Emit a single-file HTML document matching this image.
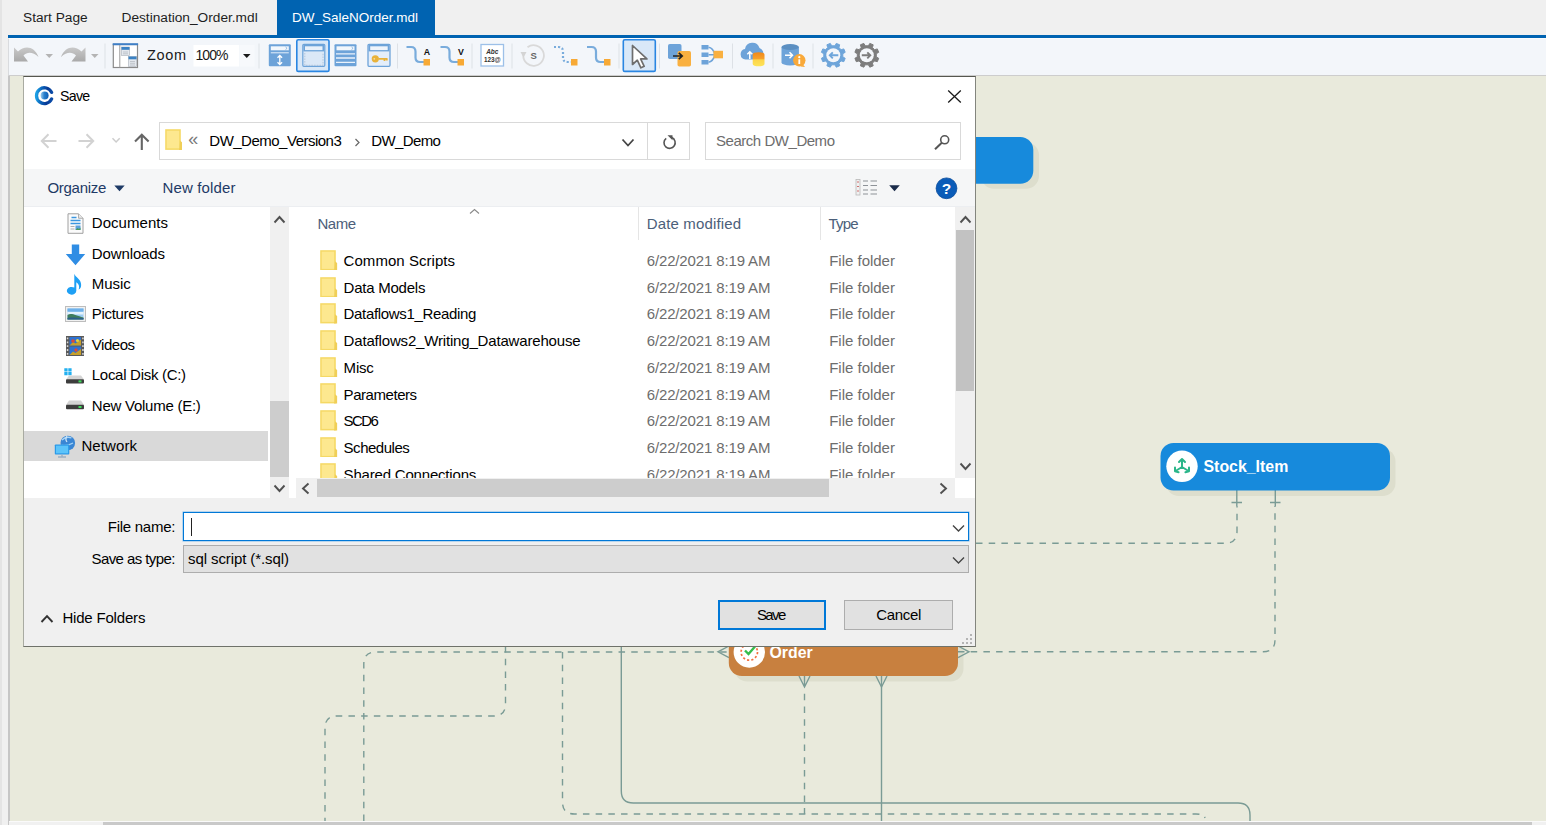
<!DOCTYPE html>
<html><head><meta charset="utf-8"><title>Save</title>
<style>
*{box-sizing:border-box;margin:0;padding:0}
html,body{width:1546px;height:825px;overflow:hidden;background:#f0f0f0;font-family:"Liberation Sans",sans-serif;color:#000}
.abs{position:absolute}
.t{position:absolute;white-space:nowrap;line-height:20px;height:20px}
#tabbar{left:0;top:0;width:1546px;height:35px;background:#f0f0f0}
#ledge{left:0;top:0;width:2px;height:825px;background:#e4e4e4}
#acttab{left:277px;top:0;width:158px;height:36px;background:#0063b1}
#blueline{left:7.500px;top:35px;width:1539px;height:2.700px;background:#0063b1}
#toolbar{left:8px;top:37.700px;width:1538px;height:38.300px;background:#f3f6fa;border-bottom:1px solid #cdcdcd;border-left:1px solid #d9dbde;border-top:1px solid #fafbfc}
#canvas{left:10px;top:76px;width:1536px;height:744.500px;background:#e9eadc}
#cborder{left:8px;top:76px;width:2px;height:749px;background:#c6c6c6}
#hscroll{left:9px;top:820.500px;width:1537px;height:4.500px;background:#f1f1f1;border-top:1px solid #fafafa}
#hthumb{left:102.500px;top:822.300px;width:1429.500px;height:3px;background:#c9c9c9}
.sep{position:absolute;top:44px;width:1px;height:25px;background:#dfe3e8}
#dialog{left:23px;top:76px;width:953px;height:571px;background:#f0f0f0;border:1px solid #83857e;border-top-color:#55574f;border-bottom-color:#6f726a;border-left-color:#a9aba2;overflow:hidden}
</style></head><body>
<div class="abs" id="tabbar"></div>
<div class="abs" id="ledge"></div>
<div class="abs" id="acttab"></div>
<div class="t" style="left:23px;top:7.800px;font-size:13.700px;color:#1e1e1e">Start Page</div>
<div class="t" style="left:121.500px;top:7.800px;font-size:13.700px;color:#1e1e1e">Destination_Order.mdl</div>
<div class="t" style="left:292px;top:7.800px;font-size:13.500px;color:#fff">DW_SaleNOrder.mdl</div>
<div class="abs" id="blueline"></div>
<div class="abs" id="toolbar"></div>
<!--TOOLBAR-S-->
<svg class="abs" style="left:9px;top:38px" width="1000" height="37" viewBox="9 38 1000 37">
<defs><linearGradient id="ug" x1="0" y1="0" x2="0" y2="1"><stop offset="0" stop-color="#c9c9c9"/><stop offset="1" stop-color="#a9a9a9"/></linearGradient></defs>
<path d="M14 61.5V47.5l4 4c7-6.5 16.5-5 20.5 5.5-5.5-5-11-5.5-15-1.5l4.5 6z" fill="url(#ug)"/>
<path d="M45.5 54h7.5l-3.75 4z" fill="#b4b4b4"/>
<path d="M85.5 61.5V47.5l-4 4c-7-6.5-16.5-5-20.5 5.5 5.5-5 11-5.5 15-1.5l-4.5 6z" fill="url(#ug)"/>
<path d="M91 54h7.5l-3.75 4z" fill="#b4b4b4"/>
<rect x="104.5" y="43.5" width="1" height="25" fill="#dde1e6"/>
<rect x="113.3" y="44.5" width="24.2" height="23" fill="#fff" stroke="#8a8a8a" stroke-width="1.2"/>
<path d="M112.7 44.2h25.4" stroke="#3f7fc6" stroke-width="2"/>
<path d="M119.8 45v22.5" stroke="#9a9a9a" stroke-width="1"/>
<rect x="121.5" y="47" width="8" height="8.5" fill="#e4e8ee" stroke="#a8b0ba" stroke-width="0.6"/><rect x="121.5" y="47" width="8" height="2.8" fill="#3b82c4"/><path d="M123 52h5M123 53.8h5" stroke="#b0b6bd" stroke-width="0.7"/>
<rect x="128.5" y="56.5" width="8" height="10" fill="#e4e8ee" stroke="#a8b0ba" stroke-width="0.6"/><rect x="128.5" y="56.5" width="8" height="2.8" fill="#3b82c4"/><path d="M130 61.5h5M130 63.3h5M130 65h5" stroke="#b0b6bd" stroke-width="0.7"/>
<rect x="193.5" y="45" width="45.5" height="21.5" fill="#fff"/>
<rect x="239.5" y="45" width="15" height="21.5" fill="#f7f9fc"/>
<path d="M243 54h7.5l-3.75 4z" fill="#1a1a1a"/>
<rect x="258.5" y="43.5" width="1" height="25" fill="#dde1e6"/>
<rect x="268.8" y="44.3" width="22" height="22" rx="1" fill="#6da3d9"/>
<rect x="270.8" y="46.3" width="18" height="4" fill="#f2f7fc"/><path d="M285.5 47l1.6 1.3-1.6 1.3" stroke="#6da3d9" stroke-width="0.7" fill="none"/>
<path d="M270.8 52.8h18" stroke="#e6effa" stroke-width="1"/>
<path d="M279.8 55.5v9M277.5 57.8l2.3-2.3 2.3 2.3M277.5 62.2l2.3 2.3 2.3-2.3" stroke="#fff" stroke-width="1.3" fill="none"/>
<rect x="296.8" y="39.8" width="32.2" height="31.6" rx="1.5" fill="#d9e8f8" stroke="#2a86e2" stroke-width="1.6"/>
<rect x="302.8" y="44.3" width="22" height="22" rx="1" fill="#dbe8f7" stroke="#6da3d9" stroke-width="1.2"/>
<rect x="303.4" y="44.9" width="20.8" height="6.5" fill="#6da3d9"/><rect x="305" y="46.3" width="17.5" height="3.8" fill="#e9f1fa"/>
<path d="M304.8 53v12.3h18.2V53" fill="none" stroke="#a9bdd3" stroke-width="0.8" stroke-dasharray="1.5 1.2"/>
<rect x="334.5" y="44.3" width="22" height="22" rx="1" fill="#6da3d9"/>
<rect x="336.5" y="46.3" width="18" height="4" fill="#f2f7fc"/><path d="M351.5 47l1.6 1.3-1.6 1.3" stroke="#6da3d9" stroke-width="0.7" fill="none"/>
<path d="M336 53.8h19M336 58h19M336 62.3h19" stroke="#eaf2fb" stroke-width="1.3"/>
<rect x="368" y="44.3" width="22" height="22" rx="1" fill="#e4eefa" stroke="#6da3d9" stroke-width="1.3"/>
<rect x="368.6" y="44.9" width="20.8" height="6.5" fill="#6da3d9"/><rect x="370.2" y="46.3" width="17.5" height="3.8" fill="#eef4fb"/>
<circle cx="375.3" cy="58.8" r="3.6" fill="#e8b23a"/><circle cx="374.3" cy="58.8" r="0.9" fill="#f6deA0"/><path d="M378.5 58.8h9M384.5 58.8v2.2M386.8 58.8v1.8" stroke="#e8b23a" stroke-width="1.8"/>
<rect x="397" y="43.5" width="1" height="25" fill="#dde1e6"/>
<path d="M406.5 47h4.5q4.5 0 4.5 4.5v6q0 4.5 4.5 4.5h4" fill="none" stroke="#79acdc" stroke-width="2.2" />
<rect x="423.5" y="59" width="6.5" height="6.5" fill="#f7a935"/>
<text x="427" y="54.5" text-anchor="middle" font-family="Liberation Sans, sans-serif" font-weight="bold" font-size="8.8" fill="#111">A</text>
<path d="M440.5 47h4.5q4.5 0 4.5 4.5v6q0 4.5 4.5 4.5h4" fill="none" stroke="#79acdc" stroke-width="2.2" />
<rect x="457.5" y="59" width="6.5" height="6.5" fill="#f7a935"/>
<text x="461" y="54.5" text-anchor="middle" font-family="Liberation Sans, sans-serif" font-weight="bold" font-size="8.8" fill="#111">V</text>
<rect x="471.5" y="43.5" width="1" height="25" fill="#dde1e6"/>
<rect x="481" y="44.5" width="22.5" height="21.5" fill="#fff" stroke="#9dc0e8" stroke-width="1.3"/>
<text x="492.3" y="53.8" text-anchor="middle" font-family="Liberation Sans, sans-serif" font-style="italic" font-weight="bold" font-size="6.5" fill="#333">Abc</text>
<text x="492.3" y="62" text-anchor="middle" font-family="Liberation Sans, sans-serif" font-weight="bold" font-size="6.3" fill="#333">123@</text>
<rect x="511.5" y="43.5" width="1" height="25" fill="#dde1e6"/>
<path d="M527.5 47.2A10.3 10.3 0 1 1 523.3 55" fill="none" stroke="#d9d9d9" stroke-width="1.8"/>
<path d="M520.5 52h6l-3 5.5z" fill="#d4d4d4"/>
<text x="533.6" y="59.3" text-anchor="middle" font-family="Liberation Sans, sans-serif" font-weight="bold" font-size="9.5" fill="#666">S</text>
<path d="M554 47h4.5q4.5 0 4.5 4.5v6q0 4.5 4.5 4.5h4" fill="none" stroke="#79acdc" stroke-width="2.2" stroke-dasharray="2 2"/>
<rect x="571" y="59" width="6.5" height="6.5" fill="#f7a935"/>
<path d="M587 47h4.5q4.5 0 4.5 4.5v6q0 4.5 4.5 4.5h4" fill="none" stroke="#79acdc" stroke-width="2.2" />
<rect x="604" y="59" width="6.5" height="6.5" fill="#f7a935"/>
<rect x="618.5" y="43.5" width="1" height="25" fill="#dde1e6"/>
<rect x="623.3" y="39.8" width="32" height="31.6" rx="1.5" fill="#d9e8f8" stroke="#2a86e2" stroke-width="1.6"/>
<path d="M632.5 45.5V64.5l4.8-4.3 3.6 7.6 3.3-1.5-3.6-7.4h6.3z" fill="#fff" stroke="#6e6e6e" stroke-width="1.7" stroke-linejoin="round"/>
<rect x="659" y="43.5" width="1" height="25" fill="#dde1e6"/>
<rect x="668" y="44" width="13.5" height="15" rx="1.8" fill="#6da3d9"/>
<rect x="677.5" y="51" width="13.5" height="15.5" rx="1.8" fill="#f9b040"/>
<path d="M673 56h9M678.8 52.8l3.4 3.2-3.4 3.2" stroke="#222" stroke-width="1.7" fill="none"/>
<rect x="701.5" y="45" width="7" height="4.5" fill="#6da3d9"/><rect x="701.5" y="52.5" width="7" height="4.5" fill="#6da3d9"/><rect x="701.5" y="60" width="7" height="4.5" fill="#6da3d9"/>
<path d="M708.5 47.3q4.5 0.5 6.5 7.5M708.5 62.3q4.5-0.5 6.5-7.5M708.5 54.8h7" stroke="#6da3d9" stroke-width="1.6" fill="none"/>
<rect x="713.5" y="50.8" width="9.5" height="7.5" fill="#f9b040"/>
<rect x="732" y="43.5" width="1" height="25" fill="#dde1e6"/>
<path d="M745.5 59.5a5.3 5.3 0 0 1-0.5-10.5 7.5 7.5 0 0 1 14.5-1 5.5 5.5 0 0 1 3.3 7.5v4z" fill="#6da3d9"/>
<path d="M749.8 59v-7M747.3 54.3l2.5-2.5 2.5 2.5" stroke="#fff" stroke-width="1.5" fill="none"/>
<defs><linearGradient id="dbg" x1="0" y1="0" x2="0" y2="1"><stop offset="0" stop-color="#f08818"/><stop offset="0.45" stop-color="#f7a02a"/><stop offset="0.55" stop-color="#fdd54a"/><stop offset="1" stop-color="#fde45a"/></linearGradient></defs>
<path d="M752.7 54.5v9.5a5.9 2.3 0 0 0 11.8 0v-9.5a5.9 2.3 0 0 0-11.8 0z" fill="url(#dbg)"/>
<rect x="772.5" y="43.5" width="1" height="25" fill="#dde1e6"/>
<path d="M781.5 47v15.5a8.7 3 0 0 0 17.4 0V47z" fill="#6da3d9"/><ellipse cx="790.2" cy="47" rx="8.7" ry="3" fill="#5b8fc2"/>
<path d="M785 55.3h7M789.5 52.3l3 3-3 3" stroke="#fff" stroke-width="1.5" fill="none"/>
<circle cx="799.3" cy="60.3" r="6.2" fill="#f9a93a"/><path d="M803 64.5l2 2.5-4.5-0.5z" fill="#f9a93a"/><rect x="798.4" y="59.3" width="1.8" height="4.7" fill="#fff"/><circle cx="799.3" cy="57.2" r="1.1" fill="#fff"/>
<rect x="812.5" y="43.5" width="1" height="25" fill="#dde1e6"/>
<path d="M845.2 58.3L843.8 61.7L841.1 60.9L838.9 63.1L839.7 65.8L836.3 67.2L834.9 64.8L831.7 64.8L830.3 67.2L826.9 65.8L827.7 63.1L825.5 60.9L822.8 61.7L821.4 58.3L823.8 56.9L823.8 53.7L821.4 52.3L822.8 48.9L825.5 49.7L827.7 47.5L826.9 44.8L830.3 43.4L831.7 45.8L834.9 45.8L836.3 43.4L839.7 44.8L838.9 47.5L841.1 49.7L843.8 48.9L845.2 52.3L842.8 53.7L842.8 56.9z" fill="#6ea5da" stroke="#6ea5da" stroke-width="1" stroke-linejoin="round"/>
<circle cx="833.3" cy="55.3" r="7" fill="#f3f6fa"/>
<path d="M838.3 55.3h-8M832.8 52.3l-3 3 3 3" stroke="#6ea5da" stroke-width="1.9" fill="none"/>
<path d="M878.7 58.3L877.3 61.7L874.6 60.9L872.4 63.1L873.2 65.8L869.8 67.2L868.4 64.8L865.2 64.8L863.8 67.2L860.4 65.8L861.2 63.1L859 60.9L856.3 61.7L854.9 58.3L857.3 56.9L857.3 53.7L854.9 52.3L856.3 48.9L859 49.7L861.2 47.5L860.4 44.8L863.8 43.4L865.2 45.8L868.4 45.8L869.8 43.4L873.2 44.8L872.4 47.5L874.6 49.7L877.3 48.9L878.7 52.3L876.3 53.7L876.3 56.9z" fill="#7d7d7d" stroke="#7d7d7d" stroke-width="1" stroke-linejoin="round"/>
<circle cx="866.8" cy="55.3" r="7" fill="#f3f6fa"/>
<path d="M861.8 55.3h8M867.3 52.3l3 3-3 3" stroke="#7d7d7d" stroke-width="1.9" fill="none"/>
</svg>
<div class="t" style="left:147px;top:45px;font-size:14.5px;letter-spacing:0.7px;color:#1a1a1a">Zoom</div>
<div class="t" style="left:195.5px;top:45px;font-size:14px;letter-spacing:-0.95px;color:#1a1a1a">100%</div>
<!--TOOLBAR-E-->
<div class="abs" id="cborder"></div>
<div class="abs" id="canvas">
<!--CANVAS-S-->
<svg class="abs" style="left:0;top:0" width="1536" height="745" viewBox="10 76 1536 745">
<!-- shadows -->
<rect x="981" y="142.300" width="58" height="46.500" rx="13" fill="#dddecd"/>
<rect x="1166" y="448.500" width="229.500" height="47.500" rx="13" fill="#dddecd"/>
<rect x="734.300" y="634.500" width="229.200" height="47" rx="13" fill="#dddecd"/>
<g fill="none" stroke="#7a9b95" stroke-width="1.4">
 <g stroke-dasharray="6.5 6.2">
  <path d="M363.8 821V664q0-12 12-12H729"/>
  <path d="M505.5 646V704q0 12-12 12H337q-12 0-12 12V821"/>
  <path d="M562.5 652V802q0 12 12 12H1196q8 0 9 4"/>
  <path d="M976 543.3H1225q12 0 12-12V506"/>
  <path d="M958 651.8H1263q12 0 12-12V506"/>
  <path d="M804.5 693.800V814"/>
 </g>
 <path d="M621.3 646V791q0 12 12 12H1238q12 0 12 12V821"/>
 <path d="M881.5 676V821"/>
 <path d="M1236.8 490V506M1231.5 502.5h10.5M1275.3 490V506M1270 502.5h10.5"/>
 <path d="M804.5 676V687M799 676l5.500 11 5.500-11M876 676l5.500 11 5.500-11"/>
 <path d="M729 646l-11 5.8 11 5.8M958 646l11 5.8-11 5.8"/>
</g>
<!-- nodes -->
<rect x="940" y="137" width="93.300" height="46.800" rx="13" fill="#178adc"/>
<rect x="1160.500" y="443" width="229.500" height="47.500" rx="13" fill="#178adc"/>
<rect x="728.800" y="629" width="229.200" height="47" rx="13" fill="#c8803f"/>
<circle cx="1182" cy="466.300" r="15.700" fill="#fff"/>
<g stroke="#2bb68a" stroke-width="2" fill="none" stroke-linecap="round" stroke-linejoin="round">
 <path d="M1182 467V459.500M1179 462l3-3 3 3M1182 467l-6.500 4M1175 467.500l0 3.800 3.600 1M1182 467l6.500 4M1189 467.500l0 3.800-3.600 1"/>
</g>
<circle cx="749.300" cy="652" r="15.700" fill="#fff"/>
<circle cx="749.300" cy="652" r="8.200" fill="none" stroke="#f4703f" stroke-width="1.700" stroke-dasharray="2.200 2.100"/>
<path d="M745 650.500l3.500 3.500 6.500-7.500" fill="none" stroke="#36bd4c" stroke-width="2.400"/>
<text x="1203.500" y="471.800" font-family="Liberation Sans, sans-serif" font-weight="bold" font-size="15.900" fill="#fff">Stock_Item</text>
<text x="769.500" y="657.500" font-family="Liberation Sans, sans-serif" font-weight="bold" font-size="15.900" fill="#fff">Order</text>
</svg>
<!--CANVAS-E-->
</div>
<div class="abs" id="hscroll"></div><div class="abs" id="hthumb"></div>
<div class="abs" id="dialog">
<!--DIALOG-S-->
<div class="abs" style="left:-24px;top:-77px;width:1546px;height:825px">
<div class="abs" style="left:24px;top:77px;width:951px;height:92px;background:#fff"></div>
<div class="abs" style="left:24px;top:169px;width:951px;height:38px;background:#f5f6f7"></div>
<div class="abs" style="left:24px;top:205.5px;width:951px;height:1.5px;background:#eceef1"></div>
<div class="abs" style="left:24px;top:207px;width:951px;height:290.5px;background:#fff"></div>
<svg class="abs" style="left:34px;top:85px" width="21" height="21" viewBox="0 0 21 21">
<defs><linearGradient id="cg" x1="0" y1="0.4" x2="1" y2="0.5"><stop offset="0" stop-color="#1c9fe4"/><stop offset="0.3" stop-color="#0c66bc"/><stop offset="0.7" stop-color="#073a96"/><stop offset="1" stop-color="#0a4aa6"/></linearGradient>
<linearGradient id="eg" x1="0" y1="0" x2="1" y2="0"><stop offset="0" stop-color="#9ccdf0"/><stop offset="0.45" stop-color="#2a80cc"/><stop offset="1" stop-color="#0d5cb4"/></linearGradient></defs>
<path d="M17.6 7.4A7.9 7.9 0 1 0 17.6 13.9" fill="none" stroke="url(#cg)" stroke-width="3.3" stroke-linecap="round"/>
<circle cx="10.6" cy="10.6" r="4" fill="url(#eg)"/></svg>
<div class="t" style="left:60px;top:86.28px;font-size:14.2px;letter-spacing:-0.722px">Save</div>
<svg class="abs" style="left:947px;top:89px" width="15" height="15" viewBox="0 0 15 15"><path d="M1.2 1.5l12.6 12M13.8 1.5L1.2 13.5" stroke="#1a1a1a" stroke-width="1.3" fill="none"/></svg>
<svg class="abs" style="left:38px;top:130px" width="115" height="22" viewBox="38 130 115 22" fill="none">
<path d="M56.5 141H42M48.5 134.3L41.8 141l6.7 6.7" stroke="#d2d2d2" stroke-width="2"/>
<path d="M78.5 141H93M86.5 134.3L93.2 141l-6.7 6.7" stroke="#d2d2d2" stroke-width="2"/>
<path d="M112.5 138.3l3.6 3.7 3.6-3.7" stroke="#cdcdcd" stroke-width="1.5"/>
<path d="M141.8 150V135.5M135 141.5l6.8-6.8 6.8 6.8" stroke="#666" stroke-width="2.1"/>
</svg>
<div class="abs" style="left:158.5px;top:122px;width:489.5px;height:37.7px;border:1px solid #d9d9d9;background:#fff"></div>
<div class="abs" style="left:647px;top:122px;width:43px;height:37.7px;border:1px solid #d9d9d9;background:#fff"></div>
<div class="abs" style="left:705px;top:122px;width:256px;height:37.7px;border:1px solid #d9d9d9;background:#fff"></div>
<svg class="abs" style="left:164.5px;top:129.3px" width="17.5" height="21" viewBox="0 0 17.5 20.5" preserveAspectRatio="none"><path d="M0.2 0.2H15.8V20.4H0.2z" fill="#f5d965"/><path d="M15 11.3l2.1 1.6V20.4H14z" fill="#f0cf58"/><path d="M1.7 1.7H14.2V18.9H1.7z" fill="#fde88f"/></svg>
<div class="t" style="left:188.3px;top:128.8px;font-size:18px;color:#7a7a7a">«</div>
<div class="t" style="left:209.3px;top:130.8px;font-size:15px;letter-spacing:-0.504px">DW_Demo_Version3</div>
<svg class="abs" style="left:353.5px;top:137.5px" width="7" height="9" viewBox="0 0 7 9"><path d="M1.5 1l3.5 3.5L1.5 8" stroke="#666" stroke-width="1.2" fill="none"/></svg>
<div class="t" style="left:371.2px;top:130.8px;font-size:15px;letter-spacing:-0.599px">DW_Demo</div>
<svg class="abs" style="left:621px;top:137px" width="14" height="12" viewBox="0 0 14 12"><path d="M1.5 2.5l5.5 6 5.5-6" stroke="#444" stroke-width="1.8" fill="none"/></svg>
<svg class="abs" style="left:662px;top:133px" width="16" height="18" viewBox="0 0 16 18" fill="none"><path d="M9.8 4.6A5.6 5.6 0 1 1 4.2 5.3" stroke="#555" stroke-width="1.6"/><path d="M5.5 2.2h5v5z" fill="#555"/></svg>
<div class="t" style="left:716px;top:130.8px;font-size:15px;letter-spacing:-0.465px;color:#6d6d6d">Search DW_Demo</div>
<svg class="abs" style="left:933px;top:134px" width="18" height="17" viewBox="0 0 18 17" fill="none"><circle cx="11.7" cy="5.8" r="4" stroke="#555" stroke-width="1.6"/><path d="M8.8 8.8L2 15.3" stroke="#555" stroke-width="2"/></svg>
<div class="t" style="left:47.4px;top:177.5px;font-size:15px;letter-spacing:-0.267px;color:#1e3a66">Organize</div>
<svg class="abs" style="left:113.5px;top:184.5px" width="11" height="7" viewBox="0 0 11 7"><path d="M0.3 0.5h10.4L5.5 6.3z" fill="#1e3a66"/></svg>
<div class="t" style="left:162.5px;top:177.5px;font-size:15px;letter-spacing:0.145px;color:#1e3a66">New folder</div>
<svg class="abs" style="left:855px;top:178px" width="24" height="18" viewBox="0 0 24 18" fill="none"><rect x="1" y="1.5" width="4" height="15.5" fill="#f1f1f1" stroke="#b9b9b9" stroke-width="0.8"/><path d="M2 4h2M2 8.5h2M2 13h2" stroke="#d07070" stroke-width="1"/><path d="M8 3h5M15.5 3h6.5M8 7.5h5M15.5 7.5h6.5M8 12h5M15.5 12h6.5M8 16h5M15.5 16h6.5" stroke="#8d9298" stroke-width="1.2"/></svg>
<svg class="abs" style="left:889px;top:185px" width="11" height="7" viewBox="0 0 11 7"><path d="M0.2 0.3h10.6L5.5 6.3z" fill="#1a2b4a"/></svg>
<svg class="abs" style="left:935px;top:176.5px" width="23" height="23" viewBox="0 0 23 23"><circle cx="11.5" cy="11.3" r="10.4" fill="#0b5cb8"/><circle cx="11.5" cy="11.3" r="10.4" fill="none" stroke="#084a9a" stroke-width="0.8"/><text x="11.6" y="17" text-anchor="middle" font-family="Liberation Sans, sans-serif" font-weight="bold" font-size="15.5" fill="#fff">?</text></svg>
<div class="abs" style="left:24px;top:431px;width:243.7px;height:29.7px;background:#d9d9d9"></div>
<svg class="abs" style="left:66.5px;top:212.8px" width="17" height="21" viewBox="0 0 17 21"><path d="M1 0.8h10.5l4.5 4.5v15H1z" fill="#fbfbfb" stroke="#a0a0a0" stroke-width="1"/><path d="M11.5 0.8v4.5h4.5" fill="#e8e8e8" stroke="#a0a0a0" stroke-width="0.8"/><path d="M4.5 4.5h5M3.5 7.5h10M3.5 10.5h10" stroke="#3a96e0" stroke-width="1.5"/><path d="M3.5 13.5h4M3.5 16h4" stroke="#b0b0b0" stroke-width="1"/><rect x="8.5" y="12.5" width="5" height="4.5" fill="#5aa0dc"/><path d="M8.5 17l2-2 1.5 1 1.5-1.5V17z" fill="#4a9a5a"/></svg>
<div class="t" style="left:91.8px;top:213px;font-size:15px;letter-spacing:0.042px">Documents</div>
<svg class="abs" style="left:64.5px;top:243.5px" width="21" height="22" viewBox="0 0 21 22"><path d="M6.8 0.5h7.4v9.5h6L10.5 21.2 0.8 10h6z" fill="#2f8de4"/></svg>
<div class="t" style="left:91.8px;top:243.7px;font-size:15px;letter-spacing:-0.12px">Downloads</div>
<svg class="abs" style="left:66px;top:273.3px" width="18" height="23" viewBox="0 0 18 23"><path d="M8.3 0.8c1.2 4.3 8.2 5.2 6.6 13.2-0.6 1.5-1.4 2.2-2.3 2.5 1.5-3.8-0.8-6.6-2.3-7.3V17.8a4.7 3.9 0 1 1-2-3.2z" fill="#1ea0f5"/></svg>
<div class="t" style="left:91.8px;top:274px;font-size:15px;letter-spacing:-0.043px">Music</div>
<svg class="abs" style="left:64.5px;top:306.3px" width="21" height="16" viewBox="0 0 21 16"><rect x="0.5" y="0.5" width="20" height="15" fill="#f1f1f1" stroke="#bdbdbd"/><rect x="2.5" y="2.5" width="16" height="11" fill="#9ccdf2"/><path d="M2.5 2.5h16v3h-16z" fill="#6fb1ea"/><path d="M2.5 6h16v2.5h-16z" fill="#e4f2fc"/><path d="M2.5 13.5V9c4-2.5 8 0.5 16 2.5v2z" fill="#3f7d5c"/><path d="M2.5 13.5v-1.5c5-1 10 0 16 0v1.5z" fill="#2d5f8a"/></svg>
<div class="t" style="left:91.8px;top:304.3px;font-size:15px;letter-spacing:-0.312px">Pictures</div>
<svg class="abs" style="left:65.8px;top:335.8px" width="18.5" height="20" viewBox="0 0 18.5 20"><rect x="0" y="0" width="18.5" height="20" fill="#5a5a5a"/><rect x="3.5" y="1" width="11.5" height="8.5" fill="#2e72d2"/><rect x="3.5" y="10.5" width="11.5" height="8.5" fill="#2e72d2"/><path d="M3.5 9.5l3.5-3.5 2.5 1.5 5.5-4v6zM3.5 19l3.5-3.5 2.5 1.5 5.5-4v6z" fill="#c8a02a"/><circle cx="7" cy="5" r="1.8" fill="#d94a3a"/><circle cx="11.5" cy="4.5" r="1.6" fill="#e8d23a"/><circle cx="10" cy="14" r="1.7" fill="#d94a3a"/><path d="M0.8 1.5h1.5v1.8h-1.5zM0.8 5.5h1.5v1.8h-1.5zM0.8 9.3h1.5v1.8h-1.5zM0.8 13.1h1.5v1.8h-1.5zM0.8 16.9h1.5v1.8h-1.5zM16.2 1.5h1.5v1.8h-1.5zM16.2 5.5h1.5v1.8h-1.5zM16.2 9.3h1.5v1.8h-1.5zM16.2 13.1h1.5v1.8h-1.5zM16.2 16.9h1.5v1.8h-1.5z" fill="#d8d8d8"/></svg>
<div class="t" style="left:91.8px;top:334.8px;font-size:15px;letter-spacing:-0.469px">Videos</div>
<svg class="abs" style="left:64px;top:367.7px" width="21" height="17" viewBox="0 0 21 17"><path d="M0.3 0.3h3.3v3.2H0.3zM4.3 0.3h3.3v3.2H4.3zM0.3 4.1h3.3v3.2H0.3zM4.3 4.1h3.3v3.2H4.3z" fill="#22b0f0"/><path d="M5 7.5h12l3 4H2z" fill="#d4d4d4"/><rect x="2" y="11.3" width="18" height="4.3" rx="1" fill="#3d3d3d"/><rect x="14.5" y="12.4" width="3" height="2" fill="#3ddc5a"/></svg>
<div class="t" style="left:91.8px;top:365.3px;font-size:15px;letter-spacing:-0.289px">Local Disk (C:)</div>
<svg class="abs" style="left:64px;top:399.3px" width="21" height="12" viewBox="0 0 21 12"><path d="M5 1.5h12l3 4.5H2z" fill="#d4d4d4"/><rect x="2" y="5.8" width="18" height="4.5" rx="1" fill="#3d3d3d"/><rect x="14.5" y="7" width="3" height="2" fill="#3ddc5a"/></svg>
<div class="t" style="left:91.8px;top:395.8px;font-size:15px;letter-spacing:-0.253px">New Volume (E:)</div>
<svg class="abs" style="left:54px;top:435px" width="22" height="23" viewBox="0 0 22 23"><circle cx="13.8" cy="8" r="7.3" fill="#3a86d4"/><path d="M8 5c2.5-2.5 6-3.5 9.5-2M7.5 10c3.5 1 7 0.5 11.5-2" stroke="#a8d4f4" stroke-width="1.3" fill="none"/><path d="M13 1c-1.5 2-1.5 4 0 6" stroke="#cfe8fa" stroke-width="1.2" fill="none"/><rect x="0.8" y="9.5" width="14.5" height="10" rx="0.8" fill="#2b9ae8"/><rect x="2" y="10.7" width="12.1" height="7.6" fill="#5cc4fa"/><path d="M4 22h8M8 19.5V22" stroke="#9ab0c4" stroke-width="1.4"/></svg>
<div class="t" style="left:81.4px;top:435.8px;font-size:15px;letter-spacing:0.098px">Network</div>
<div class="abs" style="left:269.5px;top:207px;width:19.5px;height:290.5px;background:#f0f0f0"></div>
<div class="abs" style="left:269.8px;top:400.5px;width:18.8px;height:76px;background:#cdcdcd"></div>
<svg class="abs" style="left:272.8px;top:215px" width="13" height="9" viewBox="0 0 13 9"><path d="M1.5 7.5l5-5.5 5 5.5" stroke="#505050" stroke-width="1.9" fill="none"/></svg>
<svg class="abs" style="left:272.8px;top:484px" width="13" height="9" viewBox="0 0 13 9"><path d="M1.5 1.5l5 5.5 5-5.5" stroke="#505050" stroke-width="1.9" fill="none"/></svg>
<div class="t" style="left:317.5px;top:214.1px;font-size:15px;letter-spacing:-0.505px;color:#4c607a">Name</div>
<svg class="abs" style="left:468.5px;top:207.5px" width="11" height="7" viewBox="0 0 11 7"><path d="M1 5.5l4.5-4 4.5 4" stroke="#8a8a8a" stroke-width="1.1" fill="none"/></svg>
<div class="abs" style="left:638px;top:207px;width:1px;height:33px;background:#e5e5e5"></div>
<div class="abs" style="left:820px;top:207px;width:1px;height:33px;background:#e5e5e5"></div>
<div class="t" style="left:646.7px;top:214.1px;font-size:15px;letter-spacing:0.162px;color:#4c607a">Date modified</div>
<div class="t" style="left:828.5px;top:214.1px;font-size:15px;letter-spacing:-0.84px;color:#4c607a">Type</div>
<div class="abs" style="left:290px;top:240px;width:665px;height:238px;overflow:hidden">
<svg class="abs" style="left:30px;top:9.79999999999999px" width="17.5" height="20.5" viewBox="0 0 17.5 20.5" preserveAspectRatio="none"><path d="M0.2 0.2H15.8V20.4H0.2z" fill="#f5d965"/><path d="M15 11.3l2.1 1.6V20.4H14z" fill="#f0cf58"/><path d="M1.7 1.7H14.2V18.9H1.7z" fill="#fde88f"/></svg>
<div class="t" style="left:53.6px;top:11px;font-size:15px;letter-spacing:0.049px">Common Scripts</div>
<div class="t" style="left:356.7px;top:11px;font-size:15px;letter-spacing:-0.137px;color:#6d6d6d">6/22/2021 8:19 AM</div>
<div class="t" style="left:539.2px;top:11px;font-size:15px;letter-spacing:-0.011px;color:#6d6d6d">File folder</div>
<svg class="abs" style="left:30px;top:36.49999999999998px" width="17.5" height="20.5" viewBox="0 0 17.5 20.5" preserveAspectRatio="none"><path d="M0.2 0.2H15.8V20.4H0.2z" fill="#f5d965"/><path d="M15 11.3l2.1 1.6V20.4H14z" fill="#f0cf58"/><path d="M1.7 1.7H14.2V18.9H1.7z" fill="#fde88f"/></svg>
<div class="t" style="left:53.6px;top:37.7px;font-size:15px;letter-spacing:-0.241px">Data Models</div>
<div class="t" style="left:356.7px;top:37.7px;font-size:15px;letter-spacing:-0.137px;color:#6d6d6d">6/22/2021 8:19 AM</div>
<div class="t" style="left:539.2px;top:37.7px;font-size:15px;letter-spacing:-0.011px;color:#6d6d6d">File folder</div>
<svg class="abs" style="left:30px;top:63.19999999999997px" width="17.5" height="20.5" viewBox="0 0 17.5 20.5" preserveAspectRatio="none"><path d="M0.2 0.2H15.8V20.4H0.2z" fill="#f5d965"/><path d="M15 11.3l2.1 1.6V20.4H14z" fill="#f0cf58"/><path d="M1.7 1.7H14.2V18.9H1.7z" fill="#fde88f"/></svg>
<div class="t" style="left:53.6px;top:64.4px;font-size:15px;letter-spacing:-0.337px">Dataflows1_Reading</div>
<div class="t" style="left:356.7px;top:64.4px;font-size:15px;letter-spacing:-0.137px;color:#6d6d6d">6/22/2021 8:19 AM</div>
<div class="t" style="left:539.2px;top:64.4px;font-size:15px;letter-spacing:-0.011px;color:#6d6d6d">File folder</div>
<svg class="abs" style="left:30px;top:89.89999999999995px" width="17.5" height="20.5" viewBox="0 0 17.5 20.5" preserveAspectRatio="none"><path d="M0.2 0.2H15.8V20.4H0.2z" fill="#f5d965"/><path d="M15 11.3l2.1 1.6V20.4H14z" fill="#f0cf58"/><path d="M1.7 1.7H14.2V18.9H1.7z" fill="#fde88f"/></svg>
<div class="t" style="left:53.6px;top:91.1px;font-size:15px;letter-spacing:-0.173px">Dataflows2_Writing_Datawarehouse</div>
<div class="t" style="left:356.7px;top:91.1px;font-size:15px;letter-spacing:-0.137px;color:#6d6d6d">6/22/2021 8:19 AM</div>
<div class="t" style="left:539.2px;top:91.1px;font-size:15px;letter-spacing:-0.011px;color:#6d6d6d">File folder</div>
<svg class="abs" style="left:30px;top:116.6px" width="17.5" height="20.5" viewBox="0 0 17.5 20.5" preserveAspectRatio="none"><path d="M0.2 0.2H15.8V20.4H0.2z" fill="#f5d965"/><path d="M15 11.3l2.1 1.6V20.4H14z" fill="#f0cf58"/><path d="M1.7 1.7H14.2V18.9H1.7z" fill="#fde88f"/></svg>
<div class="t" style="left:53.6px;top:117.8px;font-size:15px;letter-spacing:-0.21px">Misc</div>
<div class="t" style="left:356.7px;top:117.8px;font-size:15px;letter-spacing:-0.137px;color:#6d6d6d">6/22/2021 8:19 AM</div>
<div class="t" style="left:539.2px;top:117.8px;font-size:15px;letter-spacing:-0.011px;color:#6d6d6d">File folder</div>
<svg class="abs" style="left:30px;top:143.29999999999998px" width="17.5" height="20.5" viewBox="0 0 17.5 20.5" preserveAspectRatio="none"><path d="M0.2 0.2H15.8V20.4H0.2z" fill="#f5d965"/><path d="M15 11.3l2.1 1.6V20.4H14z" fill="#f0cf58"/><path d="M1.7 1.7H14.2V18.9H1.7z" fill="#fde88f"/></svg>
<div class="t" style="left:53.6px;top:144.5px;font-size:15px;letter-spacing:-0.448px">Parameters</div>
<div class="t" style="left:356.7px;top:144.5px;font-size:15px;letter-spacing:-0.137px;color:#6d6d6d">6/22/2021 8:19 AM</div>
<div class="t" style="left:539.2px;top:144.5px;font-size:15px;letter-spacing:-0.011px;color:#6d6d6d">File folder</div>
<svg class="abs" style="left:30px;top:169.99999999999997px" width="17.5" height="20.5" viewBox="0 0 17.5 20.5" preserveAspectRatio="none"><path d="M0.2 0.2H15.8V20.4H0.2z" fill="#f5d965"/><path d="M15 11.3l2.1 1.6V20.4H14z" fill="#f0cf58"/><path d="M1.7 1.7H14.2V18.9H1.7z" fill="#fde88f"/></svg>
<div class="t" style="left:53.6px;top:171.2px;font-size:15px;letter-spacing:-1.571px">SCD6</div>
<div class="t" style="left:356.7px;top:171.2px;font-size:15px;letter-spacing:-0.137px;color:#6d6d6d">6/22/2021 8:19 AM</div>
<div class="t" style="left:539.2px;top:171.2px;font-size:15px;letter-spacing:-0.011px;color:#6d6d6d">File folder</div>
<svg class="abs" style="left:30px;top:196.70000000000002px" width="17.5" height="20.5" viewBox="0 0 17.5 20.5" preserveAspectRatio="none"><path d="M0.2 0.2H15.8V20.4H0.2z" fill="#f5d965"/><path d="M15 11.3l2.1 1.6V20.4H14z" fill="#f0cf58"/><path d="M1.7 1.7H14.2V18.9H1.7z" fill="#fde88f"/></svg>
<div class="t" style="left:53.6px;top:197.9px;font-size:15px;letter-spacing:-0.481px">Schedules</div>
<div class="t" style="left:356.7px;top:197.9px;font-size:15px;letter-spacing:-0.137px;color:#6d6d6d">6/22/2021 8:19 AM</div>
<div class="t" style="left:539.2px;top:197.9px;font-size:15px;letter-spacing:-0.011px;color:#6d6d6d">File folder</div>
<svg class="abs" style="left:30px;top:223.39999999999995px" width="17.5" height="20.5" viewBox="0 0 17.5 20.5" preserveAspectRatio="none"><path d="M0.2 0.2H15.8V20.4H0.2z" fill="#f5d965"/><path d="M15 11.3l2.1 1.6V20.4H14z" fill="#f0cf58"/><path d="M1.7 1.7H14.2V18.9H1.7z" fill="#fde88f"/></svg>
<div class="t" style="left:53.6px;top:224.6px;font-size:15px;letter-spacing:-0.19px">Shared Connections</div>
<div class="t" style="left:356.7px;top:224.6px;font-size:15px;letter-spacing:-0.137px;color:#6d6d6d">6/22/2021 8:19 AM</div>
<div class="t" style="left:539.2px;top:224.6px;font-size:15px;letter-spacing:-0.011px;color:#6d6d6d">File folder</div>
</div>
<div class="abs" style="left:955px;top:207px;width:20px;height:271px;background:#f0f0f0"></div>
<div class="abs" style="left:955.5px;top:229.5px;width:18.5px;height:161px;background:#c2c2c2"></div>
<svg class="abs" style="left:958.5px;top:215px" width="13" height="9" viewBox="0 0 13 9"><path d="M1.5 7.5l5-5.5 5 5.5" stroke="#505050" stroke-width="1.9" fill="none"/></svg>
<svg class="abs" style="left:958.5px;top:461.5px" width="13" height="9" viewBox="0 0 13 9"><path d="M1.5 1.5l5 5.5 5-5.5" stroke="#505050" stroke-width="1.9" fill="none"/></svg>
<div class="abs" style="left:295.5px;top:478px;width:659px;height:19.5px;background:#f0f0f0"></div>
<div class="abs" style="left:316.5px;top:478.5px;width:512.5px;height:18.5px;background:#cdcdcd"></div>
<svg class="abs" style="left:301px;top:481.5px" width="9" height="13" viewBox="0 0 9 13"><path d="M7.5 1.5l-5.5 5 5.5 5" stroke="#505050" stroke-width="1.9" fill="none"/></svg>
<svg class="abs" style="left:938.5px;top:481.5px" width="9" height="13" viewBox="0 0 9 13"><path d="M1.5 1.5l5.5 5-5.5 5" stroke="#505050" stroke-width="1.9" fill="none"/></svg>
<div class="t" style="left:107.8px;top:516.8px;font-size:15px;letter-spacing:-0.27px">File name:</div>
<div class="t" style="left:91.5px;top:548.8px;font-size:15px;letter-spacing:-0.582px">Save as type:</div>
<div class="abs" style="left:182.5px;top:512.3px;width:786.5px;height:28.7px;border:1px solid #0078d7;background:#fff;box-shadow:0 0 0 0.5px #7fb9ea"></div>
<div class="abs" style="left:190.5px;top:517.5px;width:1px;height:18.5px;background:#222"></div>
<div class="abs" style="left:182.5px;top:544.5px;width:786.5px;height:28.5px;border:1px solid #adadad;background:#e1e1e1"></div>
<div class="t" style="left:188px;top:548.8px;font-size:15px;letter-spacing:-0.089px">sql script (*.sql)</div>
<svg class="abs" style="left:951.5px;top:523.5px" width="13" height="9" viewBox="0 0 13 9"><path d="M1 1.5l5.5 5.5 5.5-5.5" stroke="#444" stroke-width="1.4" fill="none"/></svg>
<svg class="abs" style="left:951.5px;top:555.5px" width="13" height="9" viewBox="0 0 13 9"><path d="M1 1.5l5.5 5.5 5.5-5.5" stroke="#444" stroke-width="1.4" fill="none"/></svg>
<svg class="abs" style="left:39.5px;top:613.5px" width="14" height="10" viewBox="0 0 14 10"><path d="M1.5 8l5.5-5.8 5.5 5.8" stroke="#333" stroke-width="1.9" fill="none"/></svg>
<div class="t" style="left:62.4px;top:608px;font-size:15px;letter-spacing:-0.185px">Hide Folders</div>
<div class="abs" style="left:717.5px;top:599.7px;width:108.8px;height:30.8px;border:2px solid #0078d7;background:#e1e1e1"></div>
<div class="t" style="left:757px;top:604.8px;font-size:15px;letter-spacing:-1.63px">Save</div>
<div class="abs" style="left:844.2px;top:600px;width:108.8px;height:30.3px;border:1px solid #adadad;background:#e1e1e1"></div>
<div class="t" style="left:876.3px;top:604.8px;font-size:15px;letter-spacing:-0.339px">Cancel</div>
<svg class="abs" style="left:960px;top:632px" width="14" height="14" viewBox="0 0 14 14" fill="#b4b4b4"><rect x="10" y="2" width="2" height="2"/><rect x="6" y="6" width="2" height="2"/><rect x="10" y="6" width="2" height="2"/><rect x="2" y="10" width="2" height="2"/><rect x="6" y="10" width="2" height="2"/><rect x="10" y="10" width="2" height="2"/></svg>
</div>
<!--DIALOG-E-->
</div>
</body></html>
